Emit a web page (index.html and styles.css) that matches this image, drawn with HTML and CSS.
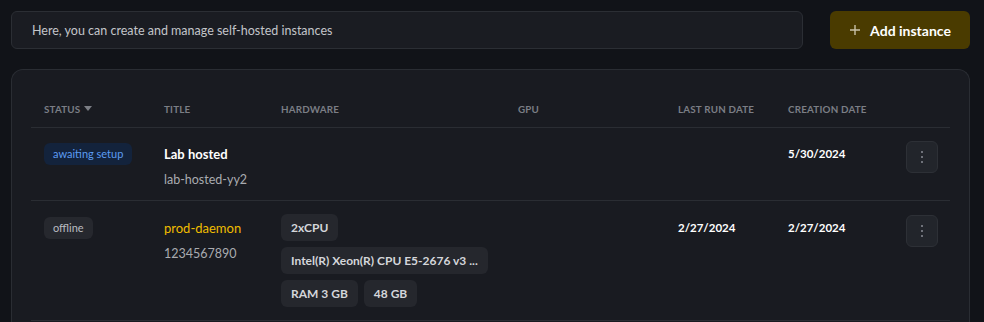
FILE: index.html
```html
<!DOCTYPE html>
<html lang="en">
  <head>
    <meta charset="UTF-8" />
    <meta name="viewport" content="width=device-width, initial-scale=1.0" />
    <title>Self-hosted instances</title>
    <link rel="stylesheet" href="styles.css">
  </head>
  <body>
    <div class="page">
      <div class="top-bar">
        <div class="info-box">Here, you can create and manage self-hosted instances</div>
        <button class="add-btn">
          <svg width="12" height="12" viewBox="0 0 12 12">
            <path d="M6 1v10M1 6h10" stroke="#c9c2a8" stroke-width="1.4" fill="none" />
          </svg>
          Add instance
        </button>
      </div>

      <div class="card">
        <div class="grid head">
          <div class="cell">Status
            <svg class="sort" width="8" height="5" viewBox="0 0 8 5"><path d="M0 0h8L4 5z" fill="#7b7e85" /></svg>
          </div>
          <div class="cell">Title</div>
          <div class="cell">Hardware</div>
          <div class="cell">GPU</div>
          <div class="cell">Last run date</div>
          <div class="cell">Creation date</div>
          <div class="cell"></div>
        </div>

        <div class="grid row">
          <div class="cell"><span class="badge badge-blue">awaiting setup</span></div>
          <div class="cell">
            <div class="title">Lab hosted</div>
            <div class="sub">lab-hosted-yy2</div>
          </div>
          <div class="cell"></div>
          <div class="cell"></div>
          <div class="cell"></div>
          <div class="cell"><div class="date">5/30/2024</div></div>
          <div class="cell">
            <button class="menu-btn"><span></span><span></span><span></span></button>
          </div>
        </div>

        <div class="grid row">
          <div class="cell"><span class="badge badge-grey">offline</span></div>
          <div class="cell">
            <div class="title gold">prod-daemon</div>
            <div class="sub">1234567890</div>
          </div>
          <div class="cell">
            <div class="chips">
              <span class="chip">2xCPU</span>
              <span class="chip">Intel(R) Xeon(R) CPU E5-2676 v3 ...</span>
              <div class="chip-line">
                <span class="chip">RAM 3 GB</span>
                <span class="chip">48 GB</span>
              </div>
            </div>
          </div>
          <div class="cell"></div>
          <div class="cell"><div class="date">2/27/2024</div></div>
          <div class="cell"><div class="date">2/27/2024</div></div>
          <div class="cell">
            <button class="menu-btn"><span></span><span></span><span></span></button>
          </div>
        </div>
      </div>
    </div>
  </body>
</html>
```

FILE: styles.css
```css
body {
  margin: 0;
  background-color: #111318;
  font-family: Lato, "Noto Sans", sans-serif;
  color: #e6e7ea;
}
.page {
  padding: 11px 14px 0 11px;
}
.top-bar {
  display: flex;
  align-items: stretch;
  gap: 27px;
  height: 38px;
}
.info-box {
  flex: 1;
  display: flex;
  align-items: center;
  padding: 0 20px;
  background-color: #1a1c22;
  border: 1px solid #2b2e34;
  border-radius: 6px;
  font-size: 12.5px;
  color: #c3c5ca;
}
.add-btn {
  width: 140px;
  display: flex;
  align-items: center;
  justify-content: center;
  gap: 9px;
  background-color: #4a3b00;
  color: #ffffff;
  border: none;
  border-radius: 6px;
  font-family: inherit;
  font-size: 14px;
  font-weight: 700;
  cursor: pointer;
}
.card {
  margin-top: 20px;
  padding: 20px 19px 0 19px;
  background-color: #191b21;
  border: 1px solid #2a2d33;
  border-bottom: none;
  border-radius: 12px 12px 0 0;
  height: 232px;
}
.grid {
  display: grid;
  grid-template-columns: 120px 117px 237px 160px 110px 118px 57px;
  border-bottom: 1px solid #2a2d33;
}
.cell {
  padding: 0 13px;
}
.head {
  height: 37px;
  align-items: center;
}
.head .cell {
  font-size: 9.8px;
  font-weight: 700;
  letter-spacing: 0.2px;
  text-transform: uppercase;
  color: #7b7e85;
  display: flex;
  align-items: center;
  gap: 4px;
}
.row {
  padding: 14px 0 8px;
  align-items: start;
}
.row + .row {
  padding: 13px 0 13px;
}
.badge {
  display: inline-block;
  margin-top: 1px;
  padding: 0 9px;
  height: 22px;
  line-height: 22px;
  border-radius: 6px;
  font-size: 11px;
}
.badge-blue {
  background-color: #13233c;
  color: #5c9cf2;
}
.badge-grey {
  background-color: #26282e;
  color: #b9bbc0;
}
.row + .row .badge {
  margin-top: 3px;
}
.title {
  font-size: 13px;
  font-weight: 700;
  line-height: 24px;
  color: #ffffff;
}
.title.gold {
  font-weight: 400;
  color: #f0bd00;
}
.row + .row .title,
.row + .row .date {
  margin-top: 2px;
}
.sub {
  margin-top: 2px;
  font-size: 12.5px;
  line-height: 24px;
  color: #a9abb0;
}
.date {
  font-size: 11.5px;
  font-weight: 700;
  line-height: 24px;
  color: #ffffff;
}
.chips {
  display: flex;
  flex-direction: column;
  align-items: flex-start;
  gap: 6px;
}
.chip-line {
  display: flex;
  gap: 6px;
}
.chip {
  display: inline-block;
  height: 27px;
  line-height: 27px;
  padding: 0 10px;
  border-radius: 6px;
  background-color: #25272d;
  font-size: 12px;
  font-weight: 700;
  color: #d4d6da;
  white-space: nowrap;
}
.menu-btn {
  width: 32px;
  height: 32px;
  margin-top: -1px;
  display: flex;
  flex-direction: column;
  align-items: center;
  justify-content: center;
  gap: 3px;
  background-color: #22252b;
  border: 1px solid #2d3036;
  border-radius: 6px;
  padding: 0;
  cursor: pointer;
}
.row + .row .menu-btn {
  margin-top: 1px;
}
.menu-btn span {
  width: 2px;
  height: 2px;
  background-color: #6f727a;
}
```
